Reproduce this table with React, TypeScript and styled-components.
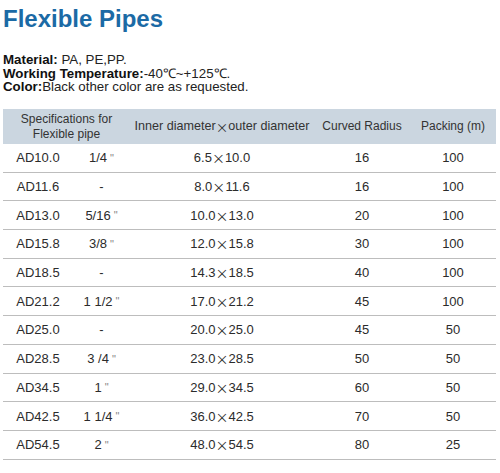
import React from "react";
import styled, { createGlobalStyle } from "styled-components";

const Global = createGlobalStyle`
  html, body { margin: 0; padding: 0; background: #fff; }
  body { font-family: "Liberation Sans", Arial, sans-serif; }
`;

const Page = styled.div`
  width: 493px;
  padding: 5px 3px 0 3px;
`;

const Title = styled.h1`
  margin: 0;
  font-size: 24px;
  line-height: 28px;
  font-weight: bold;
  color: #1b6aa5;
`;

const Info = styled.div`
  margin-top: 20px;
  font-size: 13.3px;
  line-height: 13.5px;
  color: #222;
`;

const Label = styled.b`
  color: #111;
`;

const Table = styled.div`
  margin-top: 15.5px;
  font-size: 13px;
  color: #2b2b2b;
`;

const cols = "70px 57px 184px 96px 86px";

const HeadRow = styled.div`
  display: grid;
  grid-template-columns: ${cols};
  height: 35px;
  background: #cbd6e0;
  font-size: 12px;
  line-height: 15px;
  color: #333;
`;

const HeadCell = styled.div<{ $span?: number; $size?: number }>`
  grid-column: span ${(p) => p.$span ?? 1};
  display: flex;
  align-items: center;
  justify-content: center;
  text-align: center;
  font-size: ${(p) => p.$size ?? 12}px;
`;

const Row = styled.div`
  display: grid;
  grid-template-columns: ${cols};
  height: 28.7px;
  box-sizing: border-box;
  border-bottom: 1px solid #bdbdbd;
`;

const Cell = styled.div`
  display: flex;
  align-items: center;
  justify-content: center;
`;

const Cross = styled.span`
  font-family: "Noto Sans CJK SC", sans-serif;
`;

const Inch = styled.span`
  color: #888;
  font-size: 11px;
  margin-left: 3px;
`;

type R = [string, string, string, string, number, number];

const rows: R[] = [
  ["AD10.0", "1/4", "6.5", "10.0", 16, 100],
  ["AD11.6", "-", "8.0", "11.6", 16, 100],
  ["AD13.0", "5/16", "10.0", "13.0", 20, 100],
  ["AD15.8", "3/8", "12.0", "15.8", 30, 100],
  ["AD18.5", "-", "14.3", "18.5", 40, 100],
  ["AD21.2", "1 1/2", "17.0", "21.2", 45, 100],
  ["AD25.0", "-", "20.0", "25.0", 45, 50],
  ["AD28.5", "3 /4", "23.0", "28.5", 50, 50],
  ["AD34.5", "1", "29.0", "34.5", 60, 50],
  ["AD42.5", "1 1/4", "36.0", "42.5", 70, 50],
  ["AD54.5", "2", "48.0", "54.5", 80, 25],
];

export default function App() {
  return (
    <Page>
      <Global />
      <Title>Flexible Pipes</Title>
      <Info>
        <div>
          <Label>Material:</Label> PA, PE,PP.
        </div>
        <div>
          <Label>Working Temperature:</Label>-40℃~+125℃.
        </div>
        <div>
          <Label>Color:</Label>Black other color are as requested.
        </div>
      </Info>
      <Table>
        <HeadRow>
          <HeadCell $span={2}>
            Specifications for
            <br />
            Flexible pipe
          </HeadCell>
          <HeadCell $size={12.6}>
            Inner diameter<Cross>×</Cross>outer diameter
          </HeadCell>
          <HeadCell>Curved Radius</HeadCell>
          <HeadCell>Packing (m)</HeadCell>
        </HeadRow>
        {rows.map((r) => (
          <Row key={r[0]}>
            <Cell>{r[0]}</Cell>
            <Cell>
              {r[1]}
              {r[1] !== "-" && <Inch>"</Inch>}
            </Cell>
            <Cell>
              {r[2]}
              <Cross>×</Cross>
              {r[3]}
            </Cell>
            <Cell>{r[4]}</Cell>
            <Cell>{r[5]}</Cell>
          </Row>
        ))}
      </Table>
    </Page>
  );
}
